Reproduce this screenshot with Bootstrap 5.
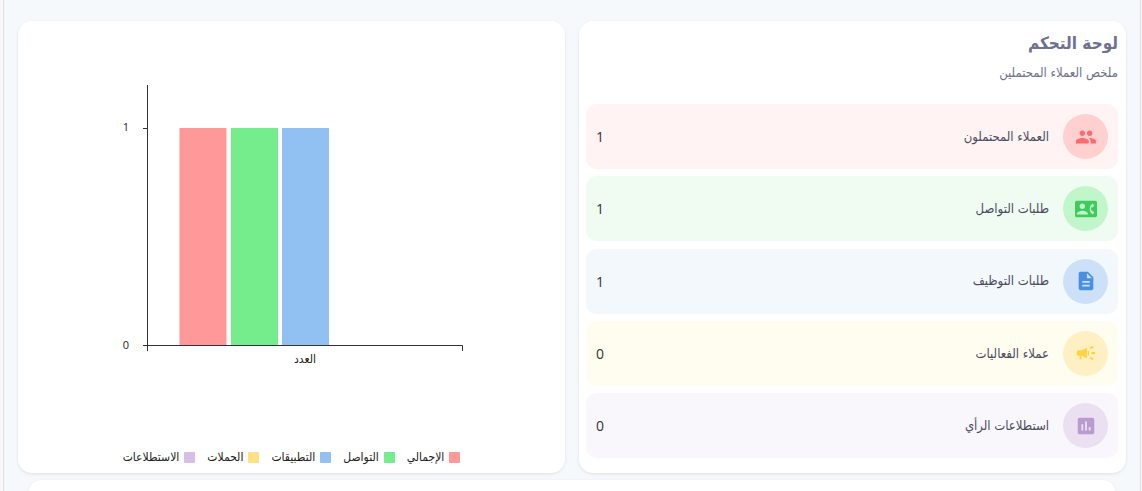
<!DOCTYPE html>
<html lang="ar" dir="rtl">
<head>
<meta charset="utf-8">
<meta name="viewport" content="width=device-width, initial-scale=1">
<title>لوحة التحكم</title>
<link href="https://cdn.jsdelivr.net/npm/bootstrap@5.3.0/dist/css/bootstrap.min.css" rel="stylesheet">
<style>
  body { background: #f9f7f7; font-family: "DejaVu Sans Condensed", "DejaVu Sans", sans-serif; color: #4a4c60; }
  .shell { background: #f5f9fc; border: 1px solid #dfe1e4; border-width: 0 1px; margin: 0 1px 0 3px; padding: 21px 14px 0; height: 100vh; overflow: hidden; }
  .panels { grid-template-columns: repeat(2, minmax(0, 1fr)); gap: 14px; }
  .panel { background: #fff; border-radius: 14px; box-shadow: 0 1px 3px rgba(40, 60, 80, .12); }
  .summary { padding: 10px 8px 15px 7px; }
  .summary h1 { font-size: 17px; line-height: 24px; font-weight: 700; color: #6e7191; margin: 0 0 9px; }
  .summary p { font-size: 13px; line-height: 18px; color: #6e7191; margin: 0 0 22px; }
  .stats { min-height: 354px; }
  .stat { height: 65px; border-radius: 10px; padding: 0 10px; gap: 14px; font-size: 13px; }
  .stat output { font: 14px "Open Sans", sans-serif; color: #333; }
  .disc { width: 45px; height: 45px; }
  .leads { background: #fff4f3; } .leads .disc { background: #ffd0cf; color: #ff6b6b; }
  .contact { background: #f0fcf2; } .contact .disc { background: #c1f6cb; color: #40c95c; }
  .jobs { background: #f3f8fd; } .jobs .disc { background: #cce1f8; color: #4a90e2; }
  .events { background: #fffcf0; } .events .disc { background: #fff0c3; color: #ffd23f; }
  .polls { background: #f9f7fb; } .polls .disc { background: #eae0f2; color: #b99bd0; }
  .chart { padding: 56px 14px 7px; }
  .chart text { font-size: 12px; fill: #222; }
  .chart .tick { font: 11px "Open Sans", sans-serif; }
  .legend { gap: 12px; font-size: 12px; line-height: 18px; color: #222; }
  .legend li { gap: 5px; }
  .swatch { width: 11px; height: 11px; border-radius: 1px; }
  .next { height: 60px; margin: 7px 10px 0; }
</style>
</head>
<body>
<main class="shell">
  <div class="panels d-grid">
    <section class="panel summary">
      <h1>لوحة التحكم</h1>
      <p>ملخص العملاء المحتملين</p>
      <div class="stats d-flex flex-column justify-content-between">
        <div class="stat leads d-flex align-items-center">
          <span class="disc rounded-circle d-flex align-items-center justify-content-center"><svg width="22" height="22" viewBox="0 0 24 24" fill="currentColor" aria-hidden="true"><path d="M16 11c1.66 0 2.99-1.34 2.99-3S17.66 5 16 5s-3 1.34-3 3 1.34 3 3 3zm-8 0c1.66 0 2.99-1.34 2.99-3S9.66 5 8 5 5 6.34 5 8s1.34 3 3 3zm0 2c-2.33 0-7 1.17-7 3.5V19h14v-2.5C15 14.17 10.33 13 8 13zm8 0c-.29 0-.62.02-.97.05 1.16.84 1.97 1.97 1.97 3.45V19h6v-2.5c0-2.33-4.67-3.5-7-3.5z"/></svg></span>
          <label for="leads">العملاء المحتملون</label><output id="leads" class="me-auto">1</output>
        </div>
        <div class="stat contact d-flex align-items-center">
          <span class="disc rounded-circle d-flex align-items-center justify-content-center"><svg width="22" height="22" viewBox="0 0 24 24" fill="currentColor" aria-hidden="true"><path fill-rule="evenodd" d="M22 3H2C.9 3 0 3.9 0 5v14c0 1.1.9 2 2 2h20c1.1 0 1.99-.9 1.99-2L24 5c0-1.1-.9-2-2-2zM8 6c1.66 0 3 1.34 3 3s-1.34 3-3 3-3-1.34-3-3 1.34-3 3-3zm6 12H2v-1c0-2 4-3.1 6-3.1s6 1.1 6 3.1v1zm3.85-4h1.64L21 16l-1.99 1.99A7.5 7.5 0 0 1 16 12a7.5 7.5 0 0 1 3.01-5.99L21 8l-1.51 2h-1.64a6 6 0 0 0 0 4z"/></svg></span>
          <label for="contact">طلبات التواصل</label><output id="contact" class="me-auto">1</output>
        </div>
        <div class="stat jobs d-flex align-items-center">
          <span class="disc rounded-circle d-flex align-items-center justify-content-center"><svg width="22" height="22" viewBox="0 0 24 24" fill="currentColor" aria-hidden="true"><path d="M14 2H6c-1.1 0-1.99.9-1.99 2L4 20c0 1.1.89 2 1.99 2H18c1.1 0 2-.9 2-2V8l-6-6zm2 16H8v-2h8v2zm0-4H8v-2h8v2zm-3-5V3.5L18.5 9H13z"/></svg></span>
          <label for="jobs">طلبات التوظيف</label><output id="jobs" class="me-auto">1</output>
        </div>
        <div class="stat events d-flex align-items-center">
          <span class="disc rounded-circle d-flex align-items-center justify-content-center"><svg width="22" height="22" viewBox="0 0 24 24" fill="currentColor" aria-hidden="true"><path d="M18 11v2h4v-2h-4zm-2 6.61c.96.71 2.21 1.65 3.2 2.39.4-.53.8-1.07 1.2-1.6-.99-.74-2.24-1.68-3.2-2.4-.4.54-.8 1.08-1.2 1.61zM20.4 5.6c-.4-.53-.8-1.07-1.2-1.6-.99.74-2.24 1.68-3.2 2.4.4.53.8 1.07 1.2 1.6.96-.72 2.21-1.65 3.2-2.4zM4 9c-1.1 0-2 .9-2 2v2c0 1.1.9 2 2 2h1v4h2v-4h1l5 3V6L8 9H4zm11.5 3c0-1.33-.58-2.53-1.5-3.35v6.69c.92-.81 1.5-2.01 1.5-3.34z"/></svg></span>
          <label for="events">عملاء الفعاليات</label><output id="events" class="me-auto">0</output>
        </div>
        <div class="stat polls d-flex align-items-center">
          <span class="disc rounded-circle d-flex align-items-center justify-content-center"><svg width="22" height="22" viewBox="0 0 24 24" fill="currentColor" aria-hidden="true"><path d="M19 3H5c-1.1 0-2 .9-2 2v14c0 1.1.9 2 2 2h14c1.1 0 2-.9 2-2V5c0-1.1-.9-2-2-2zM9 17H7v-7h2v7zm4 0h-2V7h2v10zm4 0h-2v-4h2v4z"/></svg></span>
          <label for="polls">استطلاعات الرأي</label><output id="polls" class="me-auto">0</output>
        </div>
      </div>
    </section>
    <section class="panel chart d-flex flex-column align-items-center">
      <svg class="mw-100" width="360" height="300" viewBox="0 0 360 300" role="img" aria-label="العدد">
        <rect x="67.5" y="51" width="47" height="217" fill="#ff9999"/>
        <rect x="119" y="51" width="47" height="217" fill="#75ed8c"/>
        <rect x="170" y="51" width="47" height="217" fill="#91c0f2"/>
        <path d="M35.5 8v266M31 51.5h5M31 268.5h319.500v5.5" fill="none" stroke="#333"/>
        <text class="tick" x="14" y="54" text-anchor="middle">1</text>
        <text class="tick" x="14" y="272" text-anchor="middle">0</text>
        <text x="193" y="286" text-anchor="middle">العدد</text>
      </svg>
      <ul class="legend list-unstyled d-flex flex-wrap justify-content-center mb-0 mt-auto p-0">
        <li class="d-flex align-items-center"><span class="swatch" style="background:#ff9999"></span>الإجمالي</li>
        <li class="d-flex align-items-center"><span class="swatch" style="background:#75ed8c"></span>التواصل</li>
        <li class="d-flex align-items-center"><span class="swatch" style="background:#91c0f2"></span>التطبيقات</li>
        <li class="d-flex align-items-center"><span class="swatch" style="background:#ffe082"></span>الحملات</li>
        <li class="d-flex align-items-center"><span class="swatch" style="background:#d5bfe4"></span>الاستطلاعات</li>
      </ul>
    </section>
  </div>
  <section class="panel next"></section>
</main>
<script src="https://cdn.jsdelivr.net/npm/bootstrap@5.3.0/dist/js/bootstrap.bundle.min.js"></script>
</body>
</html>
